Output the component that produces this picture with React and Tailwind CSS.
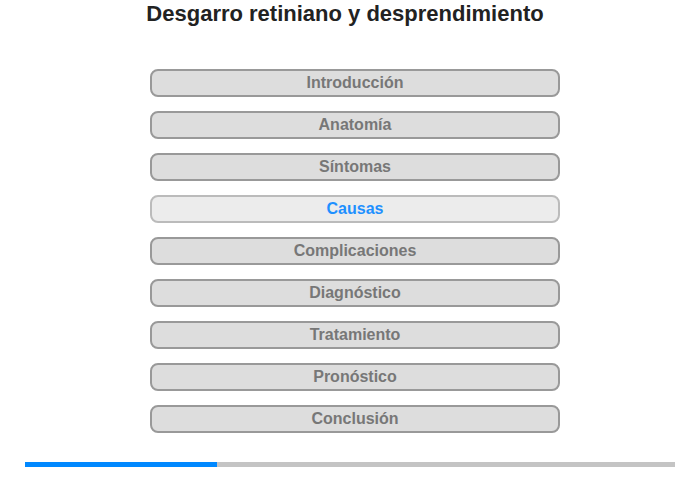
import React from 'react';

const sections = [
  'Introducción',
  'Anatomía',
  'Síntomas',
  'Causas',
  'Complicaciones',
  'Diagnóstico',
  'Tratamiento',
  'Pronóstico',
  'Conclusión',
];

export default function App() {
  const active = 'Causas';

  return (
    <div className="w-[700px] h-[480px] bg-white font-['Liberation_Sans',Arial,sans-serif] flex flex-col items-center">
      <h1 className="mr-[10px] mt-[1px] h-[26px] leading-[26px] text-[22px] font-bold text-[#222]">
        Desgarro retiniano y desprendimiento
      </h1>

      <div className="ml-[10px] mt-[42px] flex flex-col gap-[14px]">
        {sections.map((s) => (
          <div
            key={s}
            className={
              s === active
                ? 'w-[410px] h-[28px] rounded-[8px] border-2 border-[#bbb] bg-[#ececec] flex items-center justify-center text-[16px] font-bold text-[#1e90ff]'
                : 'w-[410px] h-[28px] rounded-[8px] border-2 border-[#999] bg-[#ddd] flex items-center justify-center text-[16px] font-bold text-[#777]'
            }
          >
            {s}
          </div>
        ))}
      </div>

      <div className="mt-[29px] w-[650px] h-[5px] bg-[#c4c4c4] flex">
        <div className="w-[192px] h-full bg-[#0088ff]" />
      </div>
    </div>
  );
}
